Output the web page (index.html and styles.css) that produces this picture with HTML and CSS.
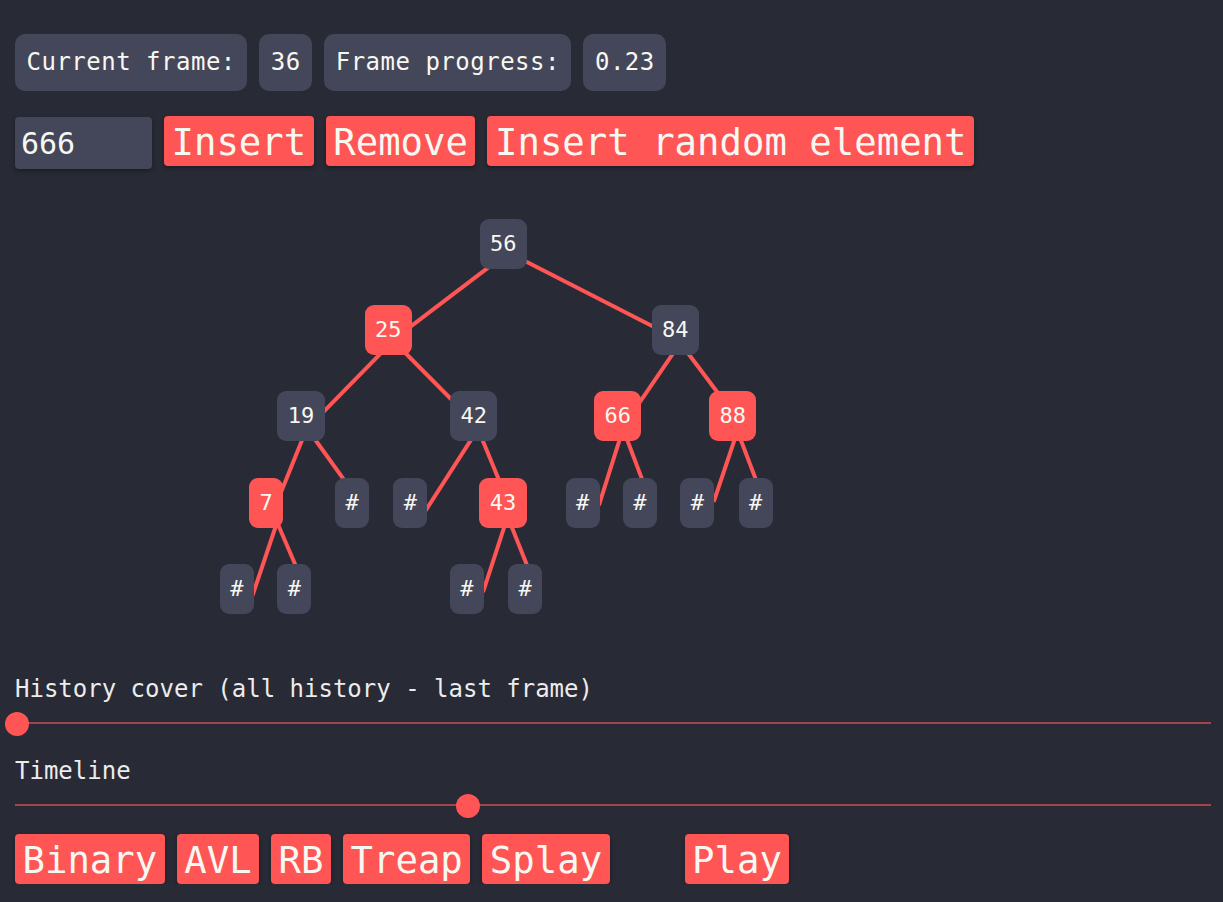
FILE: index.html
```html
<!DOCTYPE html>
<html>
    <head>
        <title>Tree Visualizer</title>
        <meta name="viewport" content="width=device-width, initial-scale=1">
        <link rel="stylesheet" href="styles.css">
    </head>
    <body>
        <div id="app">
            <div class="stats">
                <span class="stat label">Current frame:</span>
                <span class="stat value">36</span>
                <span class="stat label">Frame progress:</span>
                <span class="stat value">0.23</span>
            </div>

            <div class="controls">
                <input type="text" class="keyInput" value="666">
                <span class="button">Insert</span>
                <span class="button">Remove</span>
                <span class="button">Insert random element</span>
            </div>

            <div class="tree">
                <svg class="edges" width="1196" height="450">
                    <line x1="481.7" y1="72.1" x2="388.9" y2="142.6"/>
                    <line x1="503.1" y1="68.5" x2="643" y2="140"/>
                    <line x1="369.4" y1="160.6" x2="306" y2="225.4"/>
                    <line x1="384.9" y1="158.5" x2="442.4" y2="216.5"/>
                    <line x1="659.6" y1="162.2" x2="622.8" y2="216.2"/>
                    <line x1="672.1" y1="163" x2="705.2" y2="207"/>
                    <line x1="288.3" y1="248" x2="265.4" y2="304.7"/>
                    <line x1="299" y1="249" x2="332.5" y2="295.6"/>
                    <line x1="459" y1="246.1" x2="410.6" y2="321.6"/>
                    <line x1="466.7" y1="249" x2="485.8" y2="295.6"/>
                    <line x1="605.9" y1="246.6" x2="583.9" y2="316.3"/>
                    <line x1="611.5" y1="249" x2="629.1" y2="295.6"/>
                    <line x1="720.8" y1="247" x2="698.7" y2="312.9"/>
                    <line x1="725.1" y1="249" x2="742.8" y2="295.6"/>
                    <line x1="261.5" y1="335" x2="237.5" y2="406.5"/>
                    <line x1="262.6" y1="334.5" x2="283.2" y2="382.5"/>
                    <line x1="490.2" y1="335.2" x2="468" y2="403.1"/>
                    <line x1="495.4" y1="334.5" x2="514.5" y2="382.5"/>
                </svg>

                <div class="node" style="left: 464.5px; top: 30px">56</div>

                <div class="node red" style="left: 349.6px; top: 116px">25</div>
                <div class="node" style="left: 636.6px; top: 116px">84</div>

                <div class="node" style="left: 262.3px; top: 202px">19</div>
                <div class="node" style="left: 435px; top: 202px">42</div>
                <div class="node red" style="left: 579.2px; top: 202px">66</div>
                <div class="node red" style="left: 694px; top: 202px">88</div>

                <div class="node red" style="left: 234px; top: 289px">7</div>
                <div class="node" style="left: 320px; top: 289px">#</div>
                <div class="node" style="left: 378.3px; top: 289px">#</div>
                <div class="node red" style="left: 464.4px; top: 289px">43</div>
                <div class="node" style="left: 550.5px; top: 289px">#</div>
                <div class="node" style="left: 607.9px; top: 289px">#</div>
                <div class="node" style="left: 665.3px; top: 289px">#</div>
                <div class="node" style="left: 723.5px; top: 289px">#</div>

                <div class="node" style="left: 204.9px; top: 375px">#</div>
                <div class="node" style="left: 262.3px; top: 375px">#</div>
                <div class="node" style="left: 434.9px; top: 375px">#</div>
                <div class="node" style="left: 493px; top: 375px">#</div>
            </div>

            <div class="sliderLabel" id="historyLabel">History cover (all history - last frame)</div>
            <div class="slider">
                <div class="track"></div>
                <span class="thumb" style="left: 0.2%"></span>
            </div>

            <div class="sliderLabel" id="timelineLabel">Timeline</div>
            <div class="slider">
                <div class="track"></div>
                <span class="thumb" style="left: 37.88%"></span>
            </div>

            <div class="modes">
                <span class="button">Binary</span>
                <span class="button">AVL</span>
                <span class="button">RB</span>
                <span class="button">Treap</span>
                <span class="button">Splay</span>
                <span class="button" id="play">Play</span>
            </div>
        </div>
    </body>
</html>
```

FILE: styles.css
```css
* {
    font-family: "DejaVu Sans Mono", "Liberation Mono", monospace;
    color: #f8f8f2;
    box-sizing: border-box;
}

html, body {
    margin: 0;
    background: #282a36;
}

#app {
    padding: 34px 12px 0 15px;
}

.stats {
    display: flex;
    gap: 12px;
    height: 57px;
}

.stat {
    background: #44475a;
    border-radius: 10px;
    font-size: 24px;
    line-height: 57px;
    letter-spacing: 0.5px;
    padding: 0 11.5px;
}

.value {
    padding: 0 11.5px;
}

.controls {
    display: flex;
    align-items: flex-start;
    gap: 12px;
    margin-top: 25px;
    height: 53px;
}

.keyInput {
    width: 137px;
    height: 52px;
    margin-top: 1px;
    background: #44475a;
    border: 0;
    outline: 0;
    border-radius: 4px;
    font-size: 30px;
    padding: 0 6px;
    box-shadow: 0 2px 4px rgba(0, 0, 0, 0.35);
}

.button {
    background: #ff5555;
    border-radius: 4px;
    font-size: 37.3px;
    height: 50px;
    line-height: 52px;
    padding: 0 7.5px;
    box-shadow: 0 2px 4px rgba(0, 0, 0, 0.35);
    cursor: pointer;
    white-space: nowrap;
}

.tree {
    position: relative;
    margin-top: 20px;
    height: 450px;
}

.edges {
    position: absolute;
    left: 0;
    top: 0;
}

.edges line {
    stroke: #ff5555;
    stroke-width: 4;
}

.node {
    position: absolute;
    height: 50px;
    line-height: 50px;
    padding: 0 10.4px;
    border-radius: 9px;
    background: #44475a;
    font-size: 22px;
}

.node.red {
    background: #ff5555;
}

.sliderLabel {
    font-size: 24px;
    line-height: 28px;
    color: #ececec;
}

#historyLabel {
    margin-top: 36px;
}

#timelineLabel {
    margin-top: 22px;
}

.slider {
    position: relative;
    height: 24px;
    margin-top: 8px;
    padding-top: 11px;
}

.track {
    height: 2px;
    background: #a3434b;
}

.thumb {
    position: absolute;
    top: 1px;
    width: 24px;
    height: 24px;
    border-radius: 50%;
    background: #ff5555;
    transform: translateX(-50%);
}

.modes {
    display: flex;
    gap: 12px;
    margin-top: 17px;
}

#play {
    margin-left: 63px;
}
```
